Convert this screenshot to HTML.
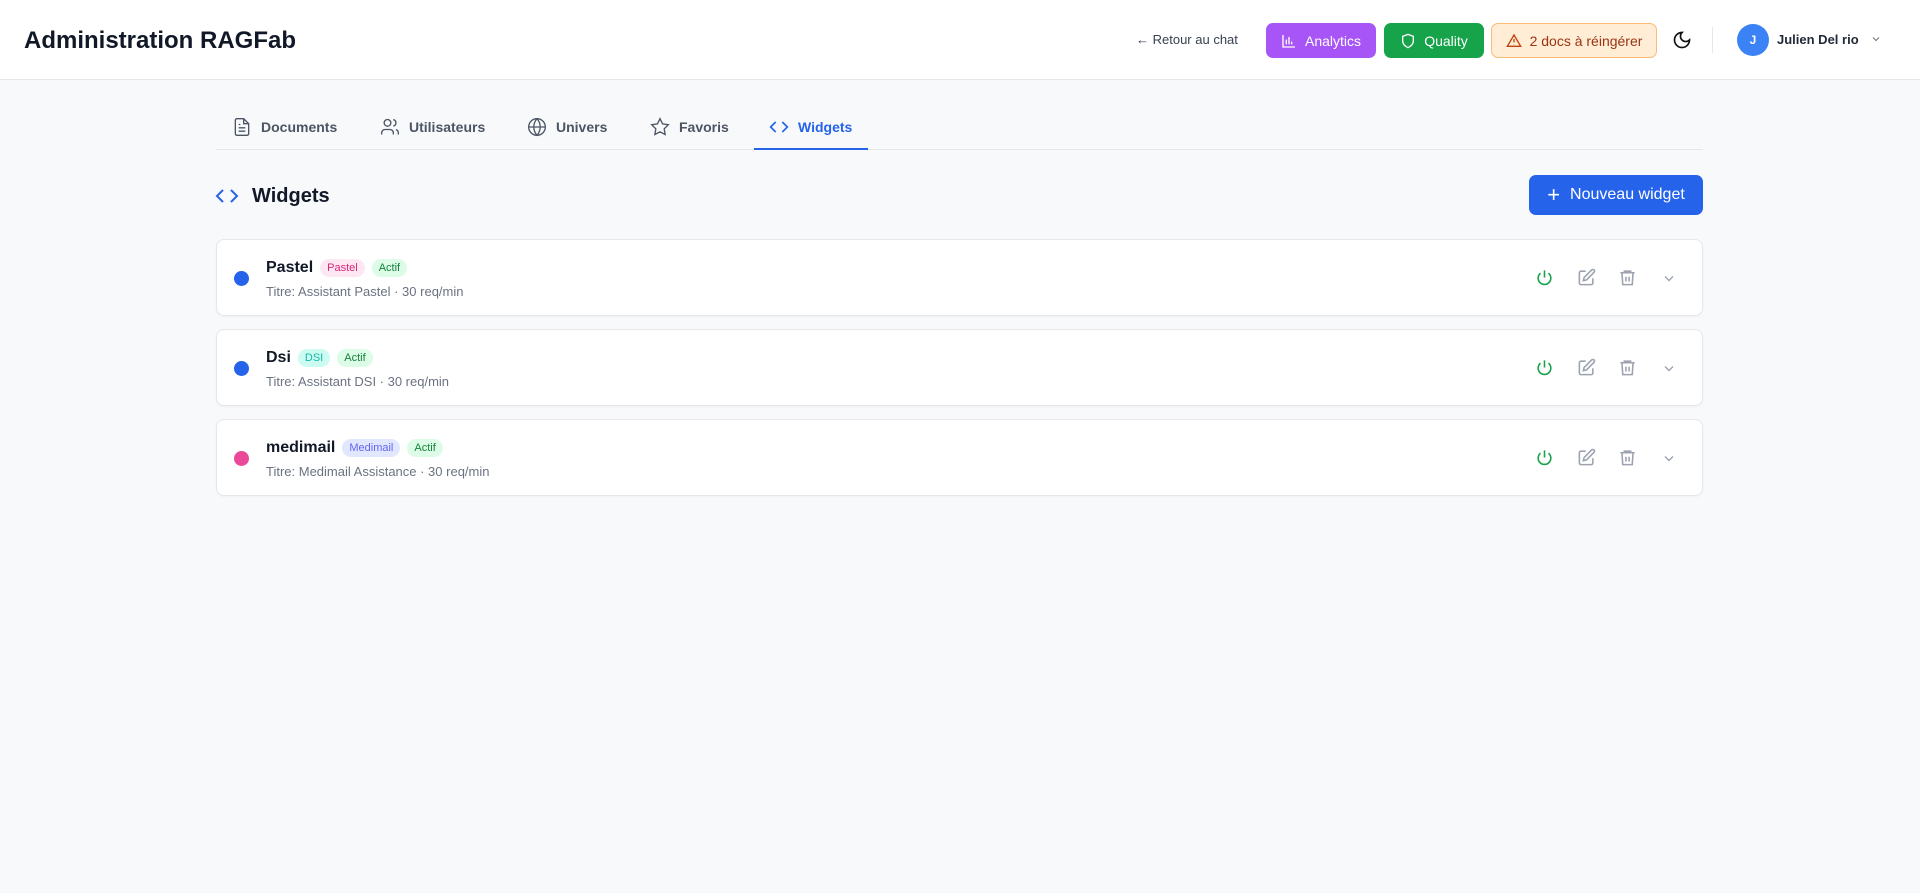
<!DOCTYPE html>
<html><head><meta charset="utf-8"><style>
*{box-sizing:border-box;margin:0;padding:0}
body{width:1920px;height:893px;background:#f8f9fb;font-family:"Liberation Sans",sans-serif;color:#111827;position:relative;overflow:hidden}
.hdr{position:absolute;left:0;top:0;width:1920px;height:80px;background:#fff;border-bottom:1px solid #e5e7eb}
.abs{position:absolute}
.title{left:24px;top:27px;font-size:24px;font-weight:bold;color:#111827}
.btn{position:absolute;top:23px;height:35px;border-radius:7px;display:flex;align-items:center;justify-content:center;gap:8px;font-size:14px;color:#fff}
.tab{position:absolute;top:117px;display:flex;align-items:center;gap:9px;font-size:14px;font-weight:bold;color:#4b5563}
.tab svg{width:20px;height:20px}
.card{position:absolute;left:216px;width:1487px;height:77px;background:#fff;border:1px solid #e5e7eb;border-radius:8px;box-shadow:0 1px 2px rgba(0,0,0,.04)}
.dot{position:absolute;left:17px;top:31px;width:15px;height:15px;border-radius:50%}
.nm{position:absolute;left:49px;top:19px;display:flex;align-items:center;gap:7px;font-size:16px;font-weight:bold}
.bd{font-size:11px;font-weight:normal;padding:3px 7px;border-radius:9px}
.sub{position:absolute;left:49px;top:44px;font-size:13px;color:#6b7280}
.ic{position:absolute;top:28px;width:19px;height:19px}
</style></head><body>
<div class="hdr">
<div class="abs title">Administration RAGFab</div>
<div class="abs" style="left:1136px;top:32px;font-size:13px;color:#374151">← Retour au chat</div>
<div class="btn" style="left:1266px;width:110px;background:#a855f7"><svg width="16" height="16" viewBox="0 0 24 24" fill="none" stroke="#fff" stroke-width="2"><path d="M3 3v18h18M8 17V10M12 17V6M16 17v-4"/></svg>Analytics</div>
<div class="btn" style="left:1384px;width:100px;background:#16a34a"><svg width="16" height="16" viewBox="0 0 24 24" fill="none" stroke="#fff" stroke-width="2"><path d="M12 2l8 3v7c0 5-4 8-8 10-4-2-8-5-8-10V5z"/></svg>Quality</div>
<div class="btn" style="left:1491px;width:166px;background:#ffedd5;border:1px solid #fdba74;color:#9a3412"><svg width="16" height="16" viewBox="0 0 24 24" fill="none" stroke="#c2410c" stroke-width="2"><path d="M12 3L2 20h20z M12 9v5 M12 17v.5"/></svg>2 docs à réingérer</div>
<svg class="abs" style="left:1672px;top:30px" width="20" height="20" viewBox="0 0 24 24" fill="none" stroke="#111" stroke-width="2"><path d="M12 3a6 6 0 0 0 9 9 9 9 0 1 1-9-9z"/></svg>
<div class="abs" style="left:1712px;top:27px;width:1px;height:26px;background:#e5e7eb"></div>
<div class="abs" style="left:1737px;top:24px;width:32px;height:32px;border-radius:50%;background:#3b82f6;color:#fff;font-size:12px;font-weight:bold;display:flex;align-items:center;justify-content:center">J</div>
<div class="abs" style="left:1777px;top:32px;font-size:13px;font-weight:bold;color:#1f2937">Julien Del rio</div>
<svg class="abs" style="left:1870px;top:33px" width="12" height="12" viewBox="0 0 24 24" fill="none" stroke="#6b7280" stroke-width="2"><path d="M6 9l6 6 6-6"/></svg>
</div>
<div class="abs" style="left:216px;top:149px;width:1487px;height:1px;background:#e5e7eb"></div>
<div class="tab" style="left:232px"><svg viewBox="0 0 24 24" fill="none" stroke="#4b5563" stroke-width="1.6"><path d="M14 2H6a2 2 0 0 0-2 2v16a2 2 0 0 0 2 2h12a2 2 0 0 0 2-2V8z M14 2v6h6 M8 13h8 M8 17h8 M8 9h2"/></svg>Documents</div>
<div class="tab" style="left:380px"><svg viewBox="0 0 24 24" fill="none" stroke="#4b5563" stroke-width="1.6"><circle cx="9" cy="7" r="4"/><path d="M2 21v-2a4 4 0 0 1 4-4h6a4 4 0 0 1 4 4v2 M16 3.1a4 4 0 0 1 0 7.8 M22 21v-2a4 4 0 0 0-3-3.9"/></svg>Utilisateurs</div>
<div class="tab" style="left:527px"><svg viewBox="0 0 24 24" fill="none" stroke="#4b5563" stroke-width="1.6"><circle cx="12" cy="12" r="10"/><path d="M2 12h20 M12 2a15 15 0 0 1 0 20 15 15 0 0 1 0-20"/></svg>Univers</div>
<div class="tab" style="left:650px"><svg viewBox="0 0 24 24" fill="none" stroke="#4b5563" stroke-width="1.6"><path d="M12 2l3.1 6.3 6.9 1-5 4.9 1.2 6.8L12 17.8 5.8 21l1.2-6.8-5-4.9 6.9-1z"/></svg>Favoris</div>
<div class="tab" style="left:769px;color:#2563eb"><svg viewBox="0 0 24 24" fill="none" stroke="#2563eb" stroke-width="2"><path d="M8 6l-6 6 6 6 M16 6l6 6-6 6"/></svg>Widgets</div>
<div class="abs" style="left:754px;top:148px;width:114px;height:2px;background:#2563eb"></div>
<svg class="abs" style="left:215px;top:184px" width="24" height="24" viewBox="0 0 24 24" fill="none" stroke="#2563eb" stroke-width="2"><path d="M8 6l-6 6 6 6 M16 6l6 6-6 6"/></svg>
<div class="abs" style="left:252px;top:185px;font-size:20px;font-weight:bold;color:#111827">Widgets</div>
<div class="abs" style="left:1529px;top:175px;width:174px;height:40px;background:#2563eb;border-radius:7px;color:#fff;font-size:16px;display:flex;align-items:center;justify-content:center;gap:10px"><span style="font-size:22px;line-height:1">+</span>Nouveau widget</div>

<div class="card" style="top:239px"><div class="dot" style="background:#2563eb"></div>
<div class="nm">Pastel <span class="bd" style="background:#fce7f3;color:#db2777">Pastel</span><span class="bd" style="background:#dcfce7;color:#15803d">Actif</span></div>
<div class="sub">Titre: Assistant Pastel · 30 req/min</div>
ICONS</div>
<div class="card" style="top:329px"><div class="dot" style="background:#2563eb"></div>
<div class="nm">Dsi <span class="bd" style="background:#ccfbf1;color:#14b8a6">DSI</span><span class="bd" style="background:#dcfce7;color:#15803d">Actif</span></div>
<div class="sub">Titre: Assistant DSI · 30 req/min</div>
ICONS</div>
<div class="card" style="top:419px"><div class="dot" style="background:#ec4899"></div>
<div class="nm">medimail <span class="bd" style="background:#e0e7ff;color:#6366f1">Medimail</span><span class="bd" style="background:#dcfce7;color:#15803d">Actif</span></div>
<div class="sub">Titre: Medimail Assistance · 30 req/min</div>
ICONS</div>
<script>
var ic='<svg class="ic" style="left:1318px" viewBox="0 0 24 24" fill="none" stroke="#16a34a" stroke-width="2"><path d="M12 3v9 M7 6.5a8 8 0 1 0 10 0"/></svg>'+
'<svg class="ic" style="left:1360px" viewBox="0 0 24 24" fill="none" stroke="#9ca3af" stroke-width="2"><path d="M11 4H5a2 2 0 0 0-2 2v13a2 2 0 0 0 2 2h13a2 2 0 0 0 2-2v-6 M18.5 2.5a2.1 2.1 0 0 1 3 3L12 15l-4 1 1-4z"/></svg>'+
'<svg class="ic" style="left:1401px" viewBox="0 0 24 24" fill="none" stroke="#9ca3af" stroke-width="2"><path d="M3 6h18 M8 6V4h8v2 M5 6l1 15h12l1-15 M10 11v6 M14 11v6"/></svg>'+
'<svg class="ic" style="left:1444px;width:16px;top:29px" viewBox="0 0 24 24" fill="none" stroke="#9ca3af" stroke-width="2"><path d="M6 9l6 6 6-6"/></svg>';
document.querySelectorAll('.card').forEach(function(c){c.innerHTML=c.innerHTML.replace('ICONS',ic)});
</script>
</body></html>
